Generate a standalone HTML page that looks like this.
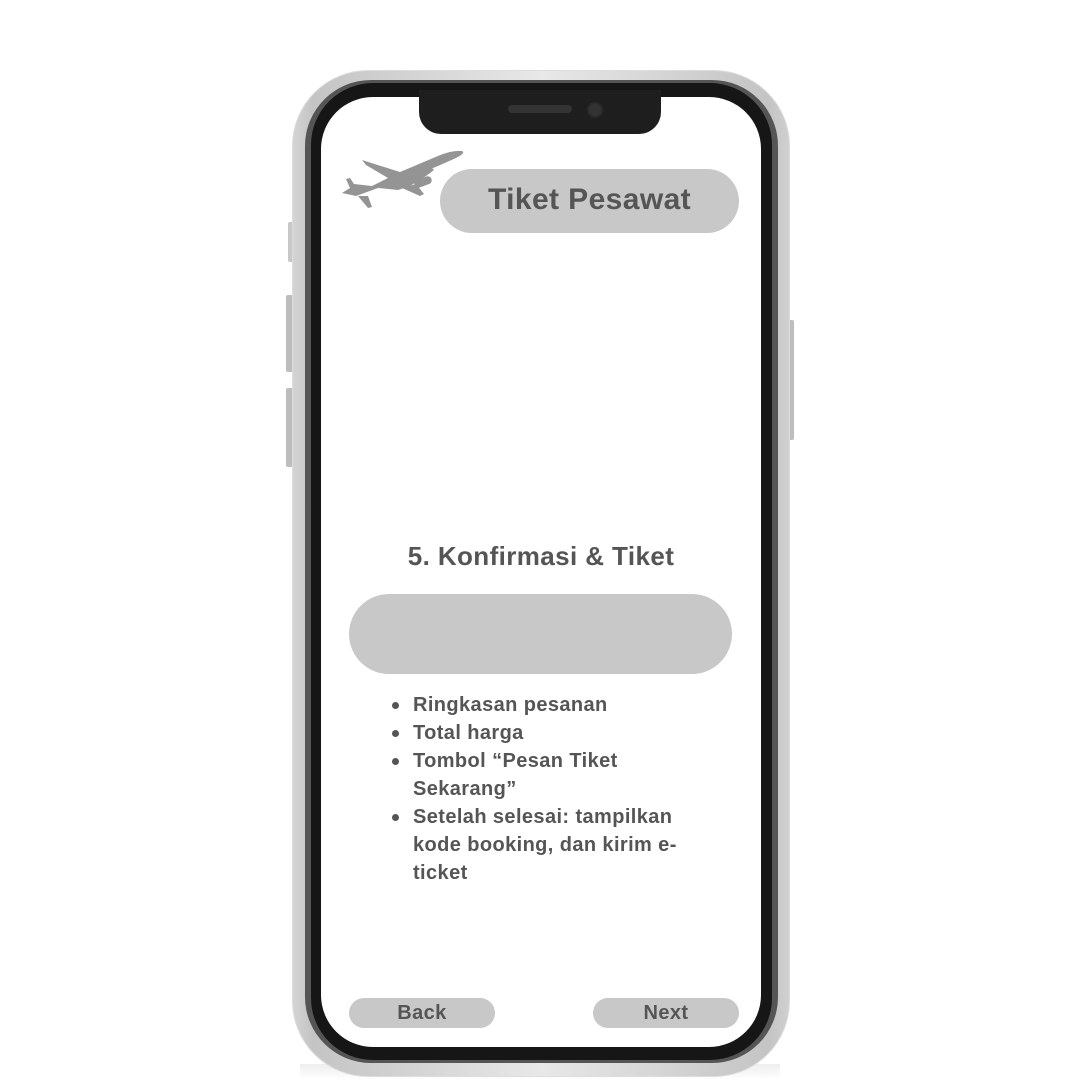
<!DOCTYPE html>
<html><head><meta charset="utf-8"><style>
*{margin:0;padding:0;box-sizing:border-box}
body{width:1080px;height:1080px;background:#fff;position:relative;overflow:hidden;font-family:"Liberation Sans",sans-serif;font-weight:bold;color:#555}
.a{position:absolute}
.t{position:absolute;white-space:nowrap;letter-spacing:0.4px}
</style></head><body>
<div class="a" style="left:300px;top:1064px;width:480px;height:16px;background:linear-gradient(#eee,#fff)"></div>
<!-- side buttons -->
<div class="a" style="left:288px;top:222px;width:6px;height:40px;background:#c8c8c8;border-radius:2px"></div>
<div class="a" style="left:286px;top:295px;width:8px;height:77px;background:#bdbdbd;border-radius:2px"></div>
<div class="a" style="left:286px;top:388px;width:8px;height:79px;background:#bdbdbd;border-radius:2px"></div>
<div class="a" style="left:786px;top:320px;width:8px;height:120px;background:#bdbdbd;border-radius:2px"></div>
<!-- frame -->
<div class="a" style="left:292px;top:70px;width:498px;height:1007px;border-radius:76px;background:linear-gradient(90deg,#d4d4d4,#c4c4c4 4%,#e8e8e8 50%,#c4c4c4 96%,#d0d0d0);border:1px solid #ddd"></div>
<div class="a" style="left:305px;top:80px;width:473px;height:983px;border-radius:66px;background:#555"></div>
<div class="a" style="left:311px;top:83px;width:461px;height:977px;border-radius:62px;background:#161616"></div>
<div class="a" style="left:321px;top:97px;width:440px;height:950px;border-radius:52px;background:#fff"></div>
<!-- notch -->
<div class="a" style="left:419px;top:90px;width:242px;height:44px;border-radius:0 0 22px 22px;background:#1e1e1e"></div>
<div class="a" style="left:508px;top:105px;width:64px;height:8px;border-radius:4px;background:#333"></div>
<div class="a" style="left:587px;top:102px;width:16px;height:16px;border-radius:50%;background:#333;border:2px solid #2a2a2a"></div>
<!-- plane -->
<svg class="a" style="left:338px;top:150px" width="130" height="65" viewBox="0 0 130 65">
<g fill="#949494">
<path d="M4 43 L18 46 L40 38 L70 28 L100 16 L118 8 Q128 3 124 1 Q114 0 100 6 L62 22 L24 10 L28 15 L50 28 L34 36 L16 34 L12 28 L8 29 L12 38 Z"/>
<path d="M40 38 L60 40 L72 36 L88 26 L96 20 L92 16 Z"/>
<path d="M64 38 L82 46 L86 44 L78 34 Z"/>
<path d="M20 46 L30 58 L34 57 L30 46 Z"/>
<rect x="76" y="28" width="18" height="8" rx="4" transform="rotate(-20 85 32)"/>
</g></svg>
<!-- title -->
<div class="a" style="left:440px;top:169px;width:299px;height:64px;border-radius:32px;background:#c8c8c8"></div>
<div class="t" style="left:440px;width:299px;text-align:center;top:181px;font-size:30px;line-height:38px;color:#555">Tiket Pesawat</div>
<div class="t" style="left:321px;width:440px;text-align:center;top:540px;font-size:26px;line-height:32px">5. Konfirmasi &amp; Tiket</div>
<div class="a" style="left:349px;top:594px;width:383px;height:80px;border-radius:40px;background:#c8c8c8"></div>
<!-- bullets -->
<div class="a" style="left:392px;top:702px;width:7px;height:7px;border-radius:50%;background:#555"></div>
<div class="a" style="left:392px;top:730px;width:7px;height:7px;border-radius:50%;background:#555"></div>
<div class="a" style="left:392px;top:758px;width:7px;height:7px;border-radius:50%;background:#555"></div>
<div class="a" style="left:392px;top:814px;width:7px;height:7px;border-radius:50%;background:#555"></div>
<div class="t" style="left:413px;top:692px;font-size:20px;line-height:26px">Ringkasan pesanan</div>
<div class="t" style="left:413px;top:720px;font-size:20px;line-height:26px">Total harga</div>
<div class="t" style="left:413px;top:748px;font-size:20px;line-height:26px">Tombol “Pesan Tiket</div>
<div class="t" style="left:413px;top:776px;font-size:20px;line-height:26px">Sekarang”</div>
<div class="t" style="left:413px;top:804px;font-size:20px;line-height:26px">Setelah selesai: tampilkan</div>
<div class="t" style="left:413px;top:832px;font-size:20px;line-height:26px">kode booking, dan kirim e-</div>
<div class="t" style="left:413px;top:860px;font-size:20px;line-height:26px">ticket</div>
<!-- buttons -->
<div class="a" style="left:349px;top:998px;width:146px;height:30px;border-radius:15px;background:#c8c8c8"></div>
<div class="t" style="left:349px;width:146px;text-align:center;top:1000px;font-size:20px;line-height:26px">Back</div>
<div class="a" style="left:593px;top:998px;width:146px;height:30px;border-radius:15px;background:#c8c8c8"></div>
<div class="t" style="left:593px;width:146px;text-align:center;top:1000px;font-size:20px;line-height:26px">Next</div>
</body></html>
